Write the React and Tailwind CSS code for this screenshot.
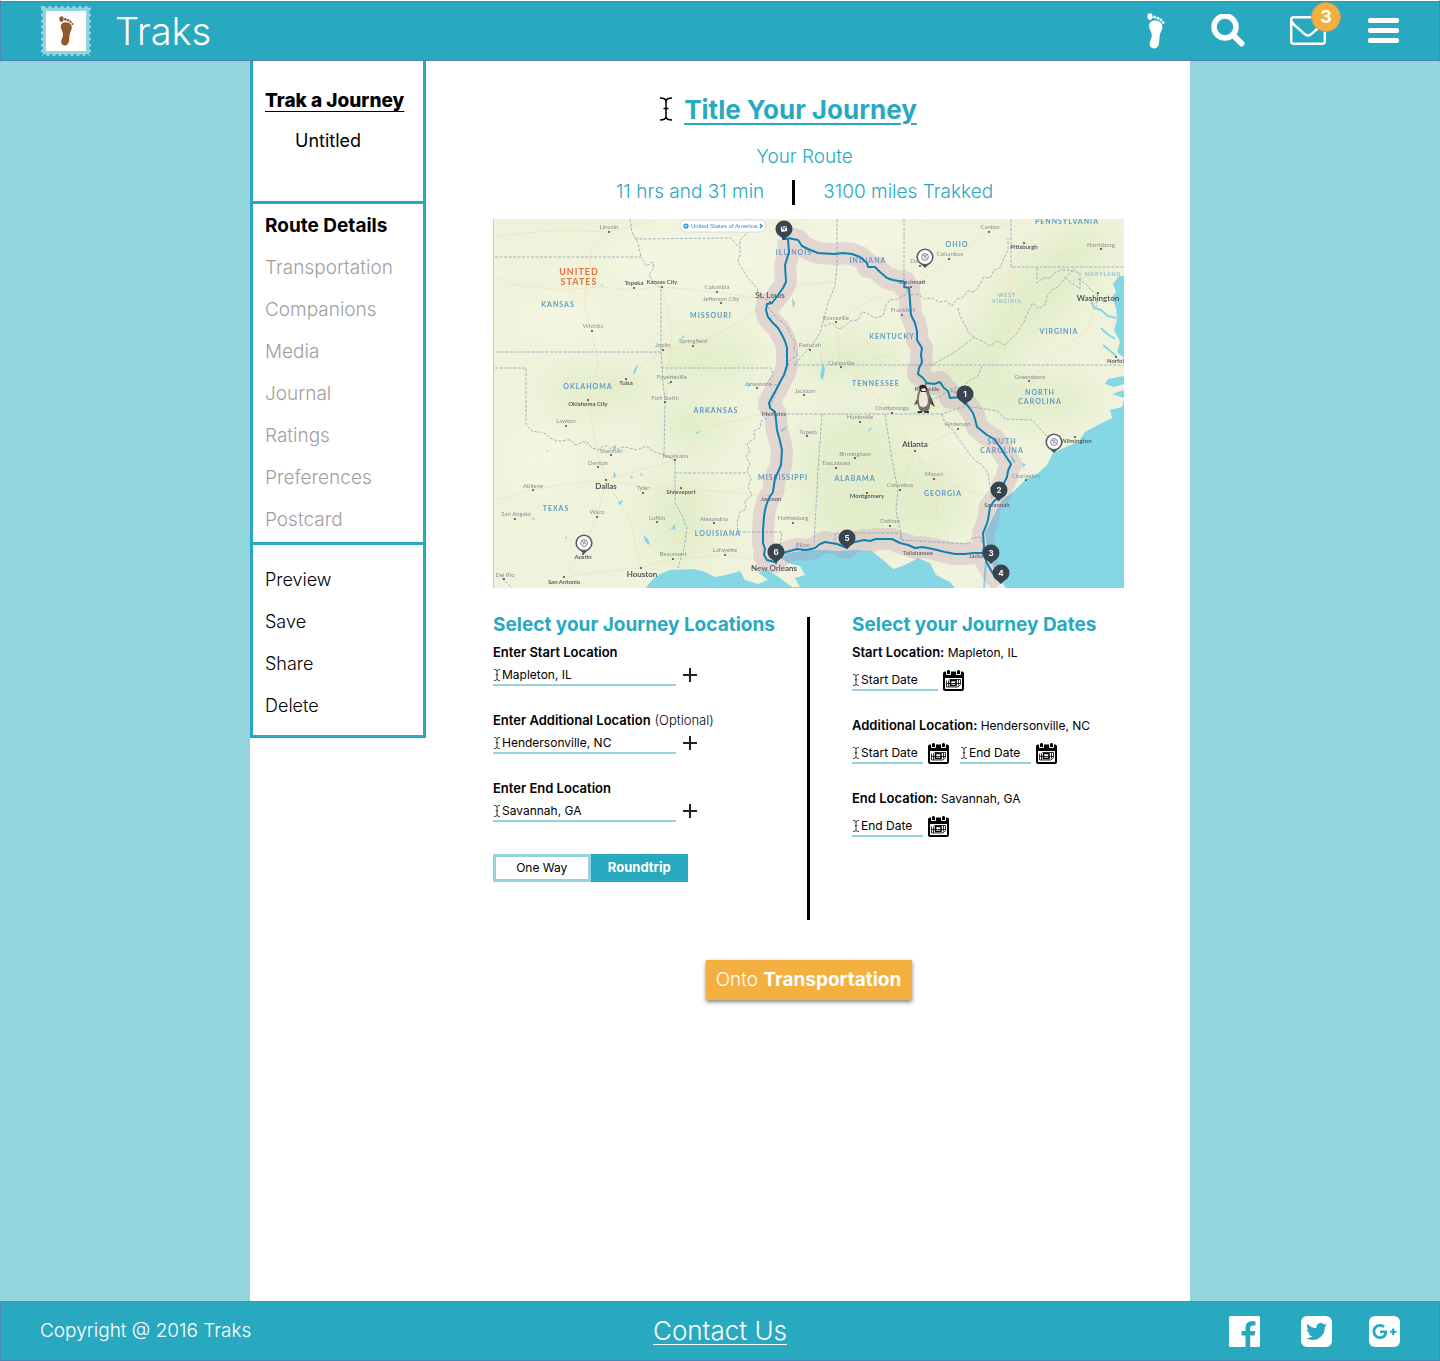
import React, { useState } from "react";
import { FaTwitter, FaGooglePlusG } from "react-icons/fa";

function Foot({ className }) {
  return (
    <svg viewBox="0 0 18 36" className={className} fill="currentColor" aria-hidden="true">
      <ellipse cx="3" cy="3.6" rx="2.6" ry="3.4" />
      <circle cx="7.6" cy="4" r="1.6" />
      <circle cx="11" cy="5.2" r="1.5" />
      <circle cx="13.9" cy="7" r="1.4" />
      <circle cx="16.2" cy="9.6" r="1.3" />
      <path d="M2.2 11.5C3 8.6 5.6 7.2 8.8 7.6c3.6.4 6.4 2.6 6.6 5.6.2 3.2-2 5.6-2.6 9-.5 2.800-.2 5.200-.8 8.200C11.400 33.600 9.600 35.400 7 35.400c-2.800 0-4.600-2-4.400-4.800.2-3 2.400-5.200 2.200-8.600C4.600 18.400 1.400 15 2.200 11.500z" />
    </svg>
  );
}

const notches = [3, 9, 15, 21, 27, 33, 39, 45];

function Stamp() {
  return (
    <span className="relative grid size-[50px] place-items-center">
      <svg viewBox="0 0 50 50" className="absolute inset-0 size-[50px]" aria-hidden="true">
        <path d="M0 0h50v50H0z" fill="#94d4de" />
        <path d="M5 5h40v40H5z" fill="#fff" />
        <g fill="#29a9c0">
          {notches.map((n) => (
            <g key={n}>
              <circle cx={n + 3} cy="0" r="1.900" />
              <circle cx={n + 1} cy="50" r="1.900" />
              <circle cx="0" cy={n + 3} r="1.900" />
              <circle cx="50" cy={n + 3} r="1.900" />
            </g>
          ))}
        </g>
      </svg>
      <Foot className="relative h-[30px] w-[15px] text-[#8f5a2b]" />
    </span>
  );
}

function TextCursor({ className }) {
  return (
    <svg viewBox="0 0 12 24" className={className} fill="none" stroke="currentColor" strokeWidth="1.500" aria-hidden="true">
      <path d="M0 1c3 0 6 .5 6 3.500V19.500c0 3-3 3.500-6 3.500M12 1C9 1 6 1.500 6 4.500M6 19.500c0 3 3 3.500 6 3.500M3.500 11.500h5" />
    </svg>
  );
}

function Calendar() {
  return (
    <svg viewBox="0 0 21 21" className="block size-[21px]" aria-hidden="true">
      <path d="M2 1.500h17a2 2 0 0 1 2 2v15.500a2 2 0 0 1-2 2H2a2 2 0 0 1-2-2V3.500a2 2 0 0 1 2-2z" fill="#000" />
      <path d="M2 8h17v11H2z" fill="#fff" />
      <path d="M3.500 1v3.500h4V1M13.500 1v3.500h4V1" fill="#000" stroke="#fff" strokeWidth="1" />
      <path d="M5.500 0v3.500M15.500 0v3.500" stroke="#000" strokeWidth="2" />
      <path d="M3.500 10.500V17H15l2.500-2.500V9.500H6.500M3.500 13.500h14M5.500 10.500V17M15.500 9.500v6" fill="none" stroke="#000" strokeWidth=".8" />
      <path d="M7.500 10.500h5.500v5H7.500z" fill="none" stroke="#000" strokeWidth="1.500" />
    </svg>
  );
}

const states = [
  ["KANSAS", 558, 307], ["MISSOURI", 711, 318], ["OKLAHOMA", 588, 389], ["ILLINOIS", 794, 255],
  ["OHIO", 957, 247], ["PENNSYLVANIA", 1067, 224], ["INDIANA", 868, 263], ["VIRGINIA", 1059, 334],
  ["KENTUCKY", 892, 339], ["TENNESSEE", 876, 386], ["NORTH", 1040, 395], ["CAROLINA", 1040, 404],
  ["ARKANSAS", 716, 413], ["MISSISSIPPI", 783, 480], ["TEXAS", 556, 511], ["LOUISIANA", 718, 536],
  ["SOUTH", 1002, 444], ["CAROLINA", 1002, 453], ["ALABAMA", 855, 481], ["GEORGIA", 943, 496],
];

const smallStates = [["WEST", 1007, 297], ["VIRGINIA", 1007, 303], ["MARYLAND", 1103, 276]];

const towns = [
  ["Lincoln", 609, 229, 609, 232], ["Columbia", 717, 289, 717, 292], ["Jefferson City", 721, 301, 721, 303],
  ["Wichita", 593, 328, 592, 331], ["Springfield", 693, 343, 693, 346], ["Joplin", 663, 347, 663, 350],
  ["Fayetteville", 672, 379, 671, 382], ["Jonesboro", 758, 386, 757, 388], ["Fort Smith", 665, 400, 665, 402],
  ["Jackson", 805, 393, 804, 395], ["Paducah", 810, 347, 810, 350], ["Canton", 990, 229, 989, 232],
  ["Columbus", 950, 256, 949, 259], ["Harrisburg", 1101, 247, 1101, 249], ["Frankfort", 903, 312, 902, 315],
  ["Evansville", 836, 320, 836, 322], ["Clarksville", 841, 365, 841, 367], ["Greensboro", 1030, 379, 1029, 381],
  ["As", 953, 393, 958, 396], ["Da", 914, 263, 920, 266],
  ["Lawton", 566, 423, 566, 426], ["Sherman", 611, 453, 611, 455], ["Denton", 598, 465, 598, 467],
  ["Abilene", 533, 488, 533, 490], ["Tyler", 643, 490, 643, 493], ["San Angelo", 516, 516, 515, 519],
  ["Waco", 597, 514, 597, 517], ["Lufkin", 657, 520, 657, 522], ["Texarkana", 675, 458, 675, 460],
  ["Tupelo", 808, 434, 807, 436],
  ["Alexandria", 714, 521, 714, 523], ["Hattiesburg", 793, 520, 793, 523], ["Lafayette", 725, 552, 725, 555],
  ["Beaumont", 673, 556, 673, 559], ["Del Rio", 505, 577, 504, 579], ["Biloxi", 803, 547, 803, 550],
  ["Chattanooga", 892, 410, 892, 413], ["Huntsville", 860, 419, 860, 422], ["Anderson", 958, 426, 958, 429],
  ["Birmingham", 855, 456, 855, 458], ["Tuscaloosa", 836, 465, 836, 468], ["Macon", 934, 476, 934, 479],
  ["Columbus", 900, 487, 900, 490], ["Charleston", 1026, 478, 1026, 480], ["Dothan", 890, 523, 890, 526],
];

const cities = [
  ["Topeka", 634, 285, 634, 288], ["Kansas City", 662, 284, 662, 287], ["Tulsa", 626, 385, 626, 379],
  ["Oklahoma City", 588, 406, 588, 400], ["Pittsburgh", 1024, 249, 1024, 243], ["Cincinnati", 912, 284, 911, 287],
  ["Norfolk", 1117, 363, 1116, 357], ["Knoxville", 927, 391, 926, 384], ["Shreveport", 681, 494, 681, 488],
  ["Memphis", 774, 416, 774, 412], ["Jackson", 771, 501, 770, 496],
  ["Austin", 583, 559, 583, 554], ["San Antonio", 564, 584, 564, 577], ["Montgomery", 867, 498, 867, 493],
  ["Wilmington", 1076, 443, 1075, 437], ["Savannah", 997, 507, 998, 500], ["Tallahassee", 918, 555, 917, 548],
  ["Jacks", 976, 558, 985, 553],
];

const metros = [
  ["St. Louis", 770, 298, 770, 302], ["Washington", 1098, 301, 1098, 293], ["Dallas", 606, 489, 606, 480],
  ["Houston", 642, 577, 641, 568], ["New Orleans", 774, 571, 776, 563], ["Atlanta", 915, 447, 915, 451],
];

const route =
  "M782 239L788 239 789 252 785 265 786 282 783 288 778 295 772 303 767 304 766 310 768 317 773 323 778 328 782 335 785 341 787 348 787 365 784 375 780 382 776 390 773 395 769 403 770 408 775 412 776 420 777 430 780 441 782 450 781 465 778 472 775 478 774 485 773 492 769 498 767 503 765 510 764 517 763 530 763 543 765 549 764 555 767 560 775 562 780 555 786 552 797 549 806 550 815 548 820 544 825 542 837 544 847 548 851 543 855 542 864 540 870 541 876 539 892 539 900 543 908 545 915 548 922 547 933 549 945 552 955 554 965 554 974 553 983 553 984 547 983 533 986 526 988 520 990 507 994 501 998 498 1001 493 1002 487 1007 477 1008 471 1011 464 1005 455 1000 447 994 439 987 435 977 427 975 419 973 413 968 406 963 400 961 397 950 398 948 391 944 388 940 382 934 384 927 383 923 378 918 374 919 368 922 362 921 355 922 348 917 340 917 331 915 323 911 315 910 301 909 288 904 287 905 282 893 280 887 278 880 272 875 267 868 267 867 263 860 257 852 254 843 253 834 254 818 253 808 249 802 246 798 240 788 238M983 553L987 563 992 572 1001 583";

const stateLines = [
  "M495 257H641L646 266 653 262 654 268 649 275 655 284 661 288V352H495",
  "M630 219L632 232 638 243 641 257M635 239L731 238 738 246M746 219L750 230 740 240 740 253 738 262 748 278 757 288 760 296 768 300",
  "M495 368H526V425L532 431 537 432 541 432 546 434 549 438 553 439 557 441 562 441 566 440 571 440 574 444 577 445 582 442 587 442 592 448 598 450 603 446 607 446 612 450 618 449 623 447 629 448 637 450 646 446 655 452 664 455",
  "M661 352L663 382 665 400 664 455 675 460V503L682 515 687 528 684 548 678 568",
  "M661 368H771L773 374 767 384 780 385M675 473H747M767 418L761 421 760 428 754 431 755 438 747 444 750 451 746 457 750 464 747 471 751 479 748 487 752 495 745 501 746 509 740 512 737 522 738 532H782L780 546",
  "M768 307L775 316 782 322 788 328 790 334 795 342 794 350 798 355 790 360 786 372 780 382 770 408",
  "M787 414L822 414 942 414 965 406 998 411 1005 419 1032 420 1045 434 1053 442",
  "M822 414L818 470 814 545M885 414L892 460 898 490 896 510 902 540M835 545V533H901V540L969 544 972 538 980 537 985 548",
  "M942 414L945 424 953 430 958 438 964 446 970 455 977 462 982 465 988 473 989 480 992 498",
  "M837 219V265L835 286 828 303 824 318 820 333 812 345 794 365H1124M824 326L832 323 838 329 844 327 850 321 858 320 862 312 867 313 875 318 883 316 886 305 890 300 898 299 905 295 910 285M904 219V280",
  "M911 295L918 294 925 299 932 298 939 302 946 301 952 306 957 299 962 298 968 291 974 292 978 287 984 277 990 278 994 270 1000 268 1004 258 1008 250V238M1011 219V267H1124",
  "M958 308L960 316 965 325 969 333 975 338 982 341 990 346 997 341 1005 345 1011 339 1017 333 1020 328 1024 322 1027 314 1033 303 1039 309 1045 305 1047 296 1052 290 1059 286 1065 278 1075 268M1037 268V283L1043 278 1050 278 1056 272 1062 270 1070 270 1080 273 1080 289 1065 278M1078 279L1085 283 1090 289 1098 295 1096 307",
  "M975 337L955 352 930 366M982 366L978 376 970 380 962 388 952 388 940 397 930 400M502 578L512 588",
];

const lakes =
  "M634 375l4-9-1-1-4 7zM667 384l3-2v2zM611 448l5-3v4zM614 471l2 5-3 2zM602 284l2 3-3-2zM623 500l-3 6-2-4zM629 475l4 2-1 2zM640 472l3 3-2 1zM664 522l5 5 6 3v-6l-4 5zM643 535l5 4 2 6-4-2zM682 519l3 8-2-4zM681 335l3 2-1 2zM820 350l2 12 3 6-2 12-3-3 2-11zM868 430l5-4-4 6zM792 297l3 7-2 4zM780 430l8-4-6 6zM748 385l4-2-4 5zM696 432l5-1-4 3zM1010 454l6 8-3 1zM1022 463l4 1-3 4zM533 517l2 3-3-1zM546 451l3-1-2 2zM565 538l2-2v3z";

function Pin({ x, y, label }) {
  return (
    <g>
      <path d={`M${x - 5} ${y + 6}L${x} ${y + 11}L${x + 5} ${y + 6}z`} fill="#36454f" />
      <circle cx={x} cy={y} r="8.500" fill="#36454f" />
      {label ? (
        <text x={x} y={y + 3} textAnchor="middle" fontSize="8" fontWeight="700" fill="#fff" fontFamily="Inter, sans-serif">{label}</text>
      ) : (
        <g transform={`rotate(-10 ${x} ${y})`}>
          <path d={`M${x - 3} ${y - 2.5}h6v5h-6z`} fill="#fff" />
          <path d={`M${x - 2} ${y - 2}h1.500v1.500h1.500v-1.500h1.500v1.500h-1.500v1.500h-1.500v-1.500h-1.500z`} fill="#36454f" />
        </g>
      )}
    </g>
  );
}

function PlacePin({ x, y }) {
  return (
    <g>
      <path d={`M${x - 4} ${y + 7}L${x} ${y + 11}L${x + 4} ${y + 7}z`} fill="#444c59" />
      <circle cx={x} cy={y} r="7.800" fill="#fff" stroke="#555c69" strokeWidth="1.600" />
      <circle cx={x} cy={y} r="3.400" fill="none" stroke="#7d8490" strokeWidth="1" />
      <path d={`M${x - 2} ${y - 2}l2 1.500-.5 2M${x + 1} ${y - 2.5}l-.5 2 1.500 2`} fill="none" stroke="#7d8490" strokeWidth="1" />
    </g>
  );
}

function Places({ items, ...rest }) {
  return (
    <g textAnchor="middle" {...rest}>
      {items.map(([name, x, y, dx, dy]) => (
        <g key={name + x}>
          <text x={x} y={y}>{name}</text>
          <circle cx={dx} cy={dy} r=".9" fill="#333" stroke="none" />
        </g>
      ))}
    </g>
  );
}

function RouteMap() {
  return (
    <svg viewBox="493 219 631 369" className="block w-full" role="img" aria-label="Map of your route" fontFamily="Lato, sans-serif">
      <defs>
        <filter id="soft" x="-20%" y="-20%" width="140%" height="140%">
          <feGaussianBlur stdDeviation="12" />
        </filter>
      </defs>
      <path d="M493 219h631v369H493z" fill="#eff3db" />
      <g fill="#dfebc6" opacity=".75" filter="url(#soft)">
        <ellipse cx="705" cy="360" rx="50" ry="22" />
        <ellipse cx="690" cy="425" rx="36" ry="24" />
        <ellipse cx="680" cy="520" rx="32" ry="44" />
        <ellipse cx="855" cy="480" rx="55" ry="70" />
        <ellipse cx="925" cy="500" rx="40" ry="40" />
        <ellipse cx="960" cy="375" rx="70" ry="30" transform="rotate(-35 960 375)" />
        <ellipse cx="1040" cy="290" rx="85" ry="32" transform="rotate(-45 1040 290)" />
        <ellipse cx="1030" cy="400" rx="60" ry="24" />
        <ellipse cx="850" cy="360" rx="50" ry="22" />
        <ellipse cx="600" cy="390" rx="50" ry="18" />
      </g>
      <g fill="#f5f6e2" opacity=".8" filter="url(#soft)">
        <ellipse cx="700" cy="260" rx="100" ry="35" />
        <ellipse cx="560" cy="320" rx="50" ry="22" />
        <ellipse cx="860" cy="235" rx="60" ry="18" />
        <ellipse cx="540" cy="460" rx="40" ry="35" />
      </g>
      <g fill="none" stroke="#f8d9ae" strokeWidth=".7" opacity=".8">
        <path d="M495 278L515 285 560 290 600 287 634 290 662 287 717 292 768 300 800 285 835 282M592 331L585 310 586 290M592 331L598 365 588 400 597 450 606 480 597 517 583 554 564 577M588 400L626 379 663 350 693 346 740 322 768 302M662 287L672 330 665 400 671 382M606 480L640 470 675 460 714 425 774 412M606 480L630 520 641 568 673 559 725 555 776 563M606 480L560 485 533 490 495 500M564 577L600 572 641 568M606 480L650 488 681 488 770 496 820 475 855 458 915 451 958 429 1000 400 1029 381M681 488L714 523 740 550M915 451L892 413 860 380 841 367 836 322 870 300 911 287 949 259 989 232 1011 222M915 451L934 479 998 500M915 451L900 490 867 493 850 530M934 479L938 520 955 550M1098 293L1088 330 1060 350 1029 381M1024 243L1075 258 1101 249 1124 240M841 367L890 355 926 384 1000 340 1060 290 1098 270M609 232L592 250 586 290M495 236L560 230 609 232 650 222M1005 350L1012 310 1010 270 1024 243M836 322L880 350" />
      </g>
      <path fill="#86d7e5" d="M646 588L652 580 660 574 670 570 694 569 705 572 715 577 730 574 740 571 745 580 758 584 768 580 758 572 768 570 780 578 792 587 800 587 795 578 805 575 800 566 788 563 781 558 788 553 808 550 825 550 838 551 855 550 872 551 883 560 893 569 905 565 918 558 930 563 936 575 950 582 955 588zM1124 588H1006L1002 582 993 567 988 552 985 533 993 517 1002 500 1013 492 1025 480 1038 473 1047 465 1053 453 1068 446 1078 442 1085 432 1098 425 1112 418 1110 410 1122 407 1124 400zM1119 276L1113 284 1116 292 1112 297 1116 308 1117 320 1114 330 1120 342 1117 352 1124 358V276zM1124 376L1108 379 1105 384 1114 387 1124 384zM1124 390L1112 394 1124 398z" />
      <path fill="none" stroke="#86d7e5" strokeWidth="2" d="M1091 300L1094 308 1101 310 1108 316 1116 318M1101 328L1106 333 1115 339M1103 345L1108 349 1116 356M988 535L986 560 984 590" />
      <path d={lakes} fill="#7fd3ea" />
      <g fill="none" stroke="#94aebd" strokeWidth=".9" strokeDasharray="3 1.500">
        {stateLines.map((d) => <path key={d} d={d} />)}
      </g>
      <g fontSize="7" fontWeight="700" textAnchor="middle" fill="#5c9cc4" letterSpacing="1">
        {states.map(([name, x, y]) => <text key={name + x} x={x} y={y}>{name}</text>)}
      </g>
      <g fontSize="5" fontWeight="700" textAnchor="middle" fill="#8dbbd6" letterSpacing="1">
        {smallStates.map(([name, x, y]) => <text key={name + x} x={x} y={y}>{name}</text>)}
      </g>
      <g fontSize="9" fontWeight="700" textAnchor="middle" fill="#e2703a" letterSpacing="1">
        <text x="579" y="275">UNITED</text>
        <text x="579" y="285">STATES</text>
      </g>
      <Places items={towns} fontSize="6" fill="#8b8f96" />
      <Places items={cities} fontSize="6" fontWeight="600" fill="#4c4f57" />
      <Places items={metros} fontSize="8" fontWeight="600" fill="#43464d" />
      <path d={route} fill="none" stroke="#b87fae" strokeOpacity=".25" strokeWidth="22" strokeLinejoin="round" />
      <path d={route} fill="none" stroke="#0f82b3" strokeWidth="2" strokeLinejoin="round" />
      <g>
        <rect x="680" y="220" width="86" height="12" rx="6" fill="#fff" stroke="#cfd8d8" strokeWidth=".8" />
        <circle cx="686" cy="226" r="2.600" fill="#2490c8" />
        <path d="M684.500 226h3M686 224.500v3" stroke="#fff" strokeWidth=".7" />
        <text x="724" y="228" fontSize="6" textAnchor="middle" fill="#2f93cc" fontFamily="'Liberation Sans', sans-serif">United States of America</text>
        <path d="M760 224l2 2-2 2" fill="none" stroke="#1d7fb8" strokeWidth="1.200" />
      </g>
      <PlacePin x={925} y={257} />
      <PlacePin x={1054} y={442} />
      <PlacePin x={584} y={543} />
      <Pin x={784} y={229} />
      <Pin x={965} y={394} label="1" />
      <Pin x={999} y={490} label="2" />
      <Pin x={991} y={553} label="3" />
      <Pin x={1001} y={573} label="4" />
      <Pin x={847} y={538} label="5" />
      <Pin x={776} y={552} label="6" />
      <g>
        <path d="M920 391l-3 8-3 6 5-2zM928 391l3 6 4 10-6-4z" fill="#4b4a48" />
        <path d="M920 388c-3 5-4 12-2 18 1 4 3 6 6 6s6-2 6-6c1-6 0-13-2-18z" fill="#77736a" />
        <path d="M920.500 391c-2 5-2 10-1 14 1 3 7 3 8-1 1-4 0-9-2-13z" fill="#efe8d8" />
        <path d="M919 388c0-3 3-4 5-3 2 0 3 2 3 4l-1 3h-5z" fill="#26282a" />
        <path d="M921 389l4-1 1 3h-4z" fill="#f3ede0" />
        <path d="M919 387l-2 1 3 1z" fill="#c58a4a" />
        <path d="M918 411h4v2h-5zM925 411h4v2h-5z" fill="#3c3732" />
      </g>
      <path d="M493.500 219v369" stroke="#c9ccc8" strokeWidth="1" />
    </svg>
  );
}

function Sidebar() {
  const steps = ["Transportation", "Companions", "Media", "Journal", "Ratings", "Preferences", "Postcard"];
  return (
    <nav aria-label="Journey" className="w-44 shrink-0 self-start border-x-[3px] border-b-[3px] border-[#29a9c0] text-lg font-light text-black">
      <div className="border-b-[3px] border-[#29a9c0] pt-5 pb-10">
        <a href="#journey" className="flex h-10 items-center pl-3 text-[19px] font-extrabold whitespace-nowrap underline decoration-1 underline-offset-4">Trak a Journey</a>
        <p className="flex h-10 items-center pl-[42px] font-normal">Untitled</p>
      </div>
      <ul className="border-b-[3px] border-[#29a9c0] py-px pl-3">
        <li><a href="#route" className="flex h-[42px] items-center text-[19px] font-bold">Route Details</a></li>
        {steps.map((s) => (
          <li key={s}><a href={`#${s.toLowerCase()}`} className="flex h-[42px] items-center text-[19px] text-[#a0a0a0]">{s}</a></li>
        ))}
      </ul>
      <div className="pt-3.5 pb-2 pl-3">
        {["Preview", "Save", "Share", "Delete"].map((s) => (
          <button key={s} type="button" className="flex h-[42px] w-full items-center">{s}</button>
        ))}
      </div>
    </nav>
  );
}

function LocationField({ id, label, note, initial }) {
  const [value, setValue] = useState(initial);
  return (
    <div>
      <label htmlFor={id} className="block h-5 text-[13px] leading-5 font-semibold whitespace-nowrap text-black">
        {label}
        {note && <span className="ml-1 font-light">{note}</span>}
      </label>
      <div className="mt-1 flex items-center gap-[7px]">
        <div className="flex h-5 w-[183px] items-center border-b-2 border-[#94d4de]">
          <TextCursor className="h-3 w-2 shrink-0" />
          <input id={id} value={value} onChange={(e) => setValue(e.target.value)} className="w-full min-w-0 pl-px text-xs text-black outline-none" />
        </div>
        <button type="button" aria-label={`Add ${label}`} className="-mt-0.5">
          <svg viewBox="0 0 14 14" className="block size-3.5" stroke="#222" strokeWidth="2" aria-hidden="true"><path d="M7 0v14M0 7h14" /></svg>
        </button>
      </div>
    </div>
  );
}

function DateField({ id, text, wide }) {
  return (
    <div className="flex items-end gap-[5px]">
      <div className={`flex h-5 items-center border-b-2 border-[#94d4de] ${wide ? "w-[86px]" : "w-[71px]"}`}>
        <TextCursor className="h-3 w-2 shrink-0" />
        <input id={id} aria-label={text} placeholder={text} className="w-full min-w-0 pl-px text-xs text-black outline-none placeholder:text-black" />
      </div>
      <button type="button" aria-label={`Pick ${text}`}><Calendar /></button>
    </div>
  );
}

function DateGroup({ title, place, children }) {
  return (
    <div>
      <p className="h-5 text-xs leading-5 whitespace-nowrap"><strong className="text-[13px] font-semibold">{title}</strong> {place}</p>
      <div className="mt-2 flex gap-[11px]">{children}</div>
    </div>
  );
}

const tripOn = "w-1/2 bg-[#29a9c0] text-[13px] font-bold text-white";
const tripOff = "w-1/2 border-3 border-[#94d4de] bg-white";

export default function App() {
  const [title, setTitle] = useState("Title Your Journey");
  const [trip, setTrip] = useState("round");
  return (
    <div className="flex min-h-screen flex-col bg-[#94d4de] font-[Inter,sans-serif]">
      <header className="flex h-[61px] items-center border border-[#4a86b8] border-t-white bg-[#29a9c0] px-10 text-white shadow-[inset_0_1px_0_#4a86b8]">
        <a href="#home" className="flex items-center gap-6 text-[38px] leading-none font-light"><Stamp />Traks</a>
        <div className="ml-auto flex items-center">
          <button type="button" aria-label="Tracks"><Foot className="h-9 w-[18px]" /></button>
          <button type="button" aria-label="Search" className="ml-[46px]">
            <svg viewBox="0 0 34 34" className="block size-[34px]" fill="none" stroke="currentColor" aria-hidden="true">
              <circle cx="14" cy="13" r="11" strokeWidth="5.500" />
              <path d="M22 21l8.500 8.500" strokeWidth="6" strokeLinecap="round" />
            </svg>
          </button>
          <button type="button" aria-label="Messages, 3 unread" className="relative ml-[45px]">
            <svg viewBox="0 0 36 29" className="block h-[29px] w-9" fill="none" stroke="currentColor" strokeWidth="2.400" aria-hidden="true">
              <rect x="1.200" y="1.200" width="33.600" height="26.600" rx="2.500" />
              <path d="M1.500 5c1 3 4 5 7 7.500 3 2.500 6.500 7 9.500 7s6.500-4.500 9.500-7c3-2.500 6-4.500 7-7.500" />
            </svg>
            <span className="absolute -top-3.5 left-[21px] grid size-[30px] place-items-center rounded-full border border-[#b9a06a] bg-[#f4af41] text-lg leading-none font-bold">3</span>
          </button>
          <button type="button" aria-label="Menu" className="ml-[42px] flex flex-col gap-[5px]">
            <span className="h-[5px] w-[31px] rounded-xs bg-white" />
            <span className="h-[5px] w-[31px] rounded-xs bg-white" />
            <span className="h-[5px] w-[31px] rounded-xs bg-white" />
          </button>
        </div>
      </header>

      <div className="mx-auto flex w-full max-w-[940px] flex-1 bg-white">
        <Sidebar />
        <main className="min-w-0 flex-1 pt-7 pr-[66px] pl-[67px]">
          <div className="flex h-10 items-center justify-center gap-3 pr-10 text-[#29a9c0]">
            <TextCursor className="h-6 w-3 text-black" />
            <input aria-label="Journey title" value={title} onChange={(e) => setTitle(e.target.value)} className="field-sizing-content text-[26px] font-bold underline decoration-2 underline-offset-4 outline-none" />
          </div>
          <div className="pr-2 text-[19px] font-light text-[#29a9c0]">
            <p className="mt-3.5 text-center leading-7">Your Route</p>
            <div className="mt-[9px] flex h-[25px] items-center justify-center gap-7 whitespace-nowrap">
              <span>11 hrs and 31 min</span>
              <span className="h-full w-[3px] bg-black" />
              <span>3100 miles Trakked</span>
            </div>
          </div>
          <div className="mt-3.5"><RouteMap /></div>

          <div className="mt-[29px] grid grid-cols-[314fr_317fr] text-black">
            <section className="pb-[38px]">
              <h2 className="text-[19px] leading-4 font-bold whitespace-nowrap text-[#29a9c0]">Select your Journey Locations</h2>
              <div className="mt-[9px] flex flex-col gap-6">
                <LocationField id="start" label="Enter Start Location" initial="Mapleton, IL" />
                <LocationField id="extra" label="Enter Additional Location" note="(Optional)" initial="Hendersonville, NC" />
                <LocationField id="end" label="Enter End Location" initial="Savannah, GA" />
              </div>
              <div className="mt-8 flex h-7 w-[195px] text-xs">
                <button type="button" aria-pressed={trip === "one"} onClick={() => setTrip("one")} className={trip === "one" ? tripOn : tripOff}>One Way</button>
                <button type="button" aria-pressed={trip === "round"} onClick={() => setTrip("round")} className={trip === "round" ? tripOn : tripOff}>Roundtrip</button>
              </div>
            </section>
            <section className="border-l-[3px] border-black pl-[42px]">
              <h2 className="text-[19px] leading-4 font-bold whitespace-nowrap text-[#29a9c0]">Select your Journey Dates</h2>
              <div className="mt-[9px] flex flex-col gap-6">
                <DateGroup title="Start Location:" place="Mapleton, IL">
                  <DateField id="d1" text="Start Date" wide />
                </DateGroup>
                <DateGroup title="Additional Location:" place="Hendersonville, NC">
                  <DateField id="d2" text="Start Date" />
                  <DateField id="d3" text="End Date" />
                </DateGroup>
                <DateGroup title="End Location:" place="Savannah, GA">
                  <DateField id="d4" text="End Date" />
                </DateGroup>
              </div>
            </section>
          </div>

          <div className="mt-10 flex justify-center">
            <button type="button" className="h-10 w-[206px] bg-[#f4af41] text-[19px] font-light whitespace-nowrap text-white shadow-[0_2px_4px_rgba(0,0,0,0.5)]">
              Onto <strong className="font-bold">Transportation</strong>
            </button>
          </div>
        </main>
      </div>

      <footer className="grid h-[60px] grid-cols-3 items-center border border-[#4a86b8] border-t-[#2f9db9] bg-[#29a9c0] px-[39px] text-white">
        <p className="text-[19px] font-light">Copyright @ 2016 Traks</p>
        <a href="#contact" className="justify-self-center text-[26px] leading-none font-light underline decoration-1 underline-offset-4">Contact Us</a>
        <div className="flex items-center justify-end">
          <a href="#facebook" aria-label="Facebook">
            <svg viewBox="0 0 31 31" className="block size-[31px]" aria-hidden="true">
              <rect width="31" height="31" rx="1.500" fill="#fff" />
              <path d="M16.500 31V19.500H12.500V15h4v-3.500c0-4 2.500-6.300 6-6.300h4v4.300h-2.500c-2 0-2.800.9-2.800 2.500v3h5l-.6 4.500h-4.400V31z" fill="#29a9c0" />
            </svg>
          </a>
          <a href="#twitter" aria-label="Twitter" className="ml-[41px] grid size-[31px] place-items-center rounded-md bg-white text-[#29a9c0]"><FaTwitter size={21} /></a>
          <a href="#google" aria-label="Google Plus" className="ml-[37px] grid size-[31px] place-items-center rounded-md bg-white text-[#29a9c0]"><FaGooglePlusG size={25} /></a>
        </div>
      </footer>
    </div>
  );
}
